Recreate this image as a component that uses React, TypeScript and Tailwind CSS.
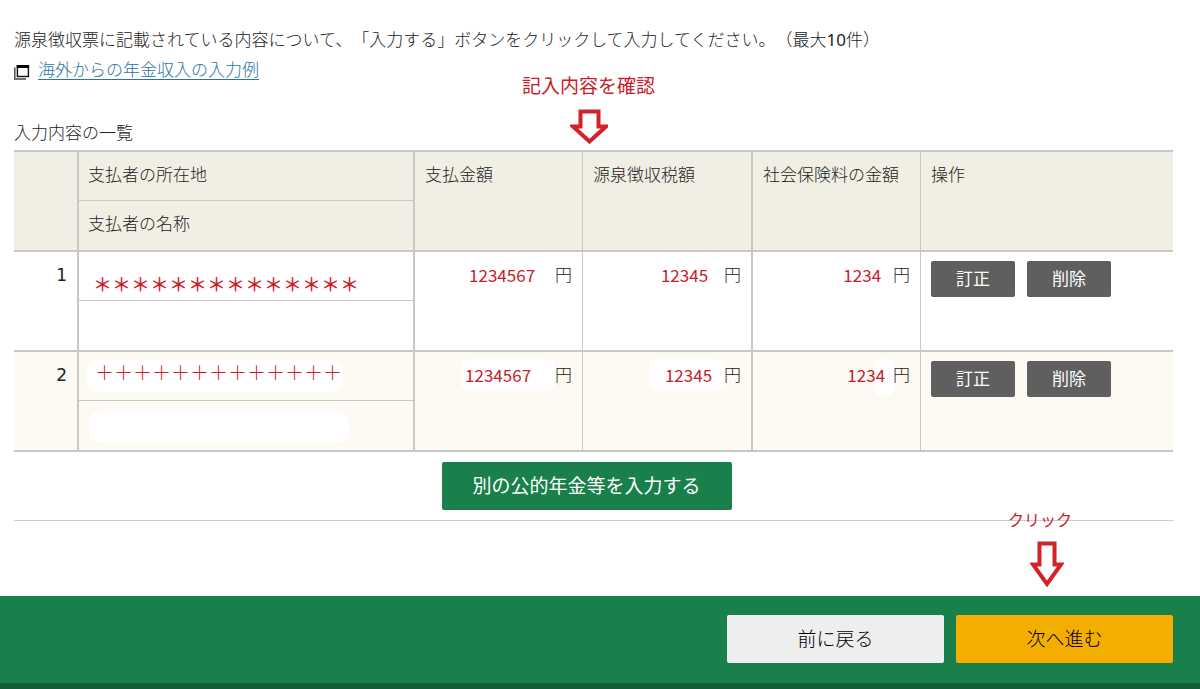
import clsx from "clsx"
import type { ReactNode } from "react"

type Payment = {
  id: number
  address: string
  amount: string
  tax: string
  insurance: string
  masked: boolean
}

const payments: Payment[] = [
  {
    id: 1,
    address: "＊＊＊＊＊＊＊＊＊＊＊＊＊＊",
    amount: "1234567",
    tax: "12345",
    insurance: "1234",
    masked: false
  },
  {
    id: 2,
    address: "＋＋＋＋＋＋＋＋＋＋＋＋＋",
    amount: "1234567",
    tax: "12345",
    insurance: "1234",
    masked: true
  }
]

function WindowIcon() {
  return (
    <svg className="mt-1 h-4 w-4" viewBox="0 0 16 16" fill="none" aria-hidden>
      <path d="M0.8 3.5V15H12" stroke="#444" strokeWidth="1.4" />
      <rect x="3.4" y="1.7" width="11" height="10.8" stroke="#111" strokeWidth="1.4" />
      <path d="M2.7 1h12.4v3H2.7z" fill="#000" />
    </svg>
  )
}

function HeadCell({
  children,
  className
}: {
  children?: ReactNode
  className?: string
}) {
  return (
    <th
      rowSpan={2}
      className={clsx(
        "border-t-2 border-[#c8c8c8] bg-[#f1efe4] px-[10px] pt-[11px] text-left align-top font-light",
        className
      )}>
      {children}
    </th>
  )
}

function AmountCell({
  value,
  border,
  className,
  children
}: {
  value: string
  border: string
  className?: string
  children?: ReactNode
}) {
  return (
    <td
      rowSpan={2}
      className={clsx(
        "border-t-2 border-[#c8c8c8] px-[10px] pt-[11px] align-top",
        border
      )}>
      <div className="relative flex justify-end">
        {children}
        <span
          className={clsx(
            "relative font-['Noto_Sans_CJK_JP',sans-serif] font-normal text-[#c8202a]",
            className
          )}>
          {value}
        </span>
        <span>円</span>
      </div>
    </td>
  )
}

function RowButton({ children }: { children: ReactNode }) {
  return (
    <button className="h-9 w-[84px] cursor-pointer rounded-xs bg-[#5f5f5f] font-normal text-white">
      {children}
    </button>
  )
}

function PaymentRows({ payment }: { payment: Payment }) {
  const { masked } = payment
  const bg = masked ? "bg-[#fdfaf3]" : "bg-white"

  return (
    <>
      <tr className={clsx("h-[50px]", bg)}>
        <td
          rowSpan={2}
          className="border-t-2 border-[#c8c8c8] px-[10px] pt-[11px] text-right align-top font-normal">
          {payment.id}
        </td>
        <td className="border-t-2 border-l-2 border-[#c8c8c8] px-2 align-top">
          <div
            className={clsx(
              "font-['Noto_Sans_CJK_JP',sans-serif] text-[19px] leading-6 text-[#c8202a]",
              masked
                ? "mt-2 h-8 w-[256px] rounded-xl bg-white pl-2 font-light"
                : "mt-5 pl-[6px] font-medium"
            )}>
            {payment.address}
          </div>
        </td>
        <AmountCell
          value={payment.amount}
          border="border-l-2"
          className={masked ? "-my-1 rounded-lg bg-white py-1 pr-6 pl-1" : "pr-5"}
        />
        <AmountCell
          value={payment.tax}
          border="border-l"
          className={masked ? "-my-1 rounded-lg bg-white py-1 pr-3 pl-4" : "pr-4"}
        />
        <AmountCell
          value={payment.insurance}
          border="border-l-2"
          className={masked ? "pr-2" : "pr-3"}>
          {masked && (
            <span className="absolute -top-1 right-4 h-9 w-5 rounded-md bg-white" />
          )}
        </AmountCell>
        <td
          rowSpan={2}
          className="border-t-2 border-l border-[#c8c8c8] px-[10px] pt-[9px] align-top">
          <div className="flex gap-3">
            <RowButton>訂正</RowButton>
            <RowButton>削除</RowButton>
          </div>
        </td>
      </tr>
      <tr className={clsx("h-[50px]", bg)}>
        <td className="border-t border-l-2 border-[#c8c8c8] px-[10px] pt-[10px] align-top">
          {masked && <div className="h-8 w-[260px] rounded-xl bg-white" />}
        </td>
      </tr>
    </>
  )
}

function App() {
  return (
    <div className="bg-white font-['DejaVu_Sans','Noto_Sans_CJK_JP',sans-serif] text-[17px] leading-6 font-light text-[#222]">
      <main className="pt-7 pr-[27px] pb-[75px] pl-[14px]">
        <p className="[text-spacing-trim:space-all]">
          源泉徴収票に記載されている内容について、「入力する」ボタンをクリックして入力してください。（最大
          <span className="font-['Noto_Sans',sans-serif] font-normal">10</span>件）
        </p>
        <div className="mt-[6px] flex items-center gap-2">
          <WindowIcon />
          <a
            href="#example"
            className="text-[#2a74a5] underline underline-offset-[3px]">
            海外からの年金収入の入力例
          </a>
        </div>

        <div className="relative mt-[39px]">
          <table className="w-full table-fixed border-separate border-spacing-0 border-b-2 border-[#c8c8c8]">
            <caption className="pb-[5px] text-left">入力内容の一覧</caption>
            <colgroup>
              <col className="w-[63px]" />
              <col className="w-[29%]" />
              <col className="w-[169px]" />
              <col className="w-[169px]" />
              <col className="w-[169px]" />
              <col />
            </colgroup>
            <thead>
              <tr className="h-[50px]">
                <HeadCell />
                <th className="border-t-2 border-l-2 border-[#c8c8c8] bg-[#f1efe4] px-[9px] pt-[11px] text-left align-top font-light">
                  支払者の所在地
                </th>
                <HeadCell className="border-l-2">支払金額</HeadCell>
                <HeadCell className="border-l">源泉徴収税額</HeadCell>
                <HeadCell className="border-l-2">社会保険料の金額</HeadCell>
                <HeadCell className="border-l">操作</HeadCell>
              </tr>
              <tr className="h-[50px]">
                <th className="border-t border-l-2 border-[#c8c8c8] bg-[#f1efe4] px-[9px] pt-[11px] text-left align-top font-light">
                  支払者の名称
                </th>
              </tr>
            </thead>
            <tbody>
              {payments.map((payment) => (
                <PaymentRows key={payment.id} payment={payment} />
              ))}
            </tbody>
          </table>

          <div className="absolute -top-[47px] left-[508px] flex flex-col items-center gap-[11px] font-normal text-[#c8202a]">
            <span className="text-[19px]">記入内容を確認</span>
            <svg width="38" height="35" viewBox="0 0 38 35" aria-hidden>
              <path
                d="M10.5 2.5H28.5V17.500H36L19.500 32.500L3 17.500H10.5Z"
                fill="#fff"
                stroke="#d2232a"
                strokeWidth="4"
              />
            </svg>
          </div>
        </div>

        <div className="flex justify-center py-[10px] pr-[14px]">
          <button className="h-12 w-[290px] cursor-pointer rounded-xs bg-[#1a804b] text-[19px] font-normal text-white">
            別の公的年金等を入力する
          </button>
        </div>

        <div className="relative border-t border-[#ccc]">
          <div className="absolute -top-3 right-[101px] flex flex-col items-end gap-2 font-normal text-[#c8202a]">
            <span className="text-[16px]">クリック</span>
            <svg className="mr-2" width="34" height="46" viewBox="0 0 34 46" aria-hidden>
              <path
                d="M9.500 2.500H24.500V23.500H31L17 43L3 23.500H9.500Z"
                fill="#fff"
                stroke="#d2232a"
                strokeWidth="4"
              />
            </svg>
          </div>
        </div>
      </main>

      <footer className="flex justify-end gap-3 border-b-[6px] border-[#125c36] bg-[#1a804b] pt-[19px] pr-[27px] pb-[20px] text-[19px]">
        <button className="h-12 w-[217px] cursor-pointer rounded-xs bg-[#eee] text-black">
          前に戻る
        </button>
        <button className="h-12 w-[217px] cursor-pointer rounded-xs bg-[#f4ae00] text-black">
          次へ進む
        </button>
      </footer>
    </div>
  )
}

export default App
